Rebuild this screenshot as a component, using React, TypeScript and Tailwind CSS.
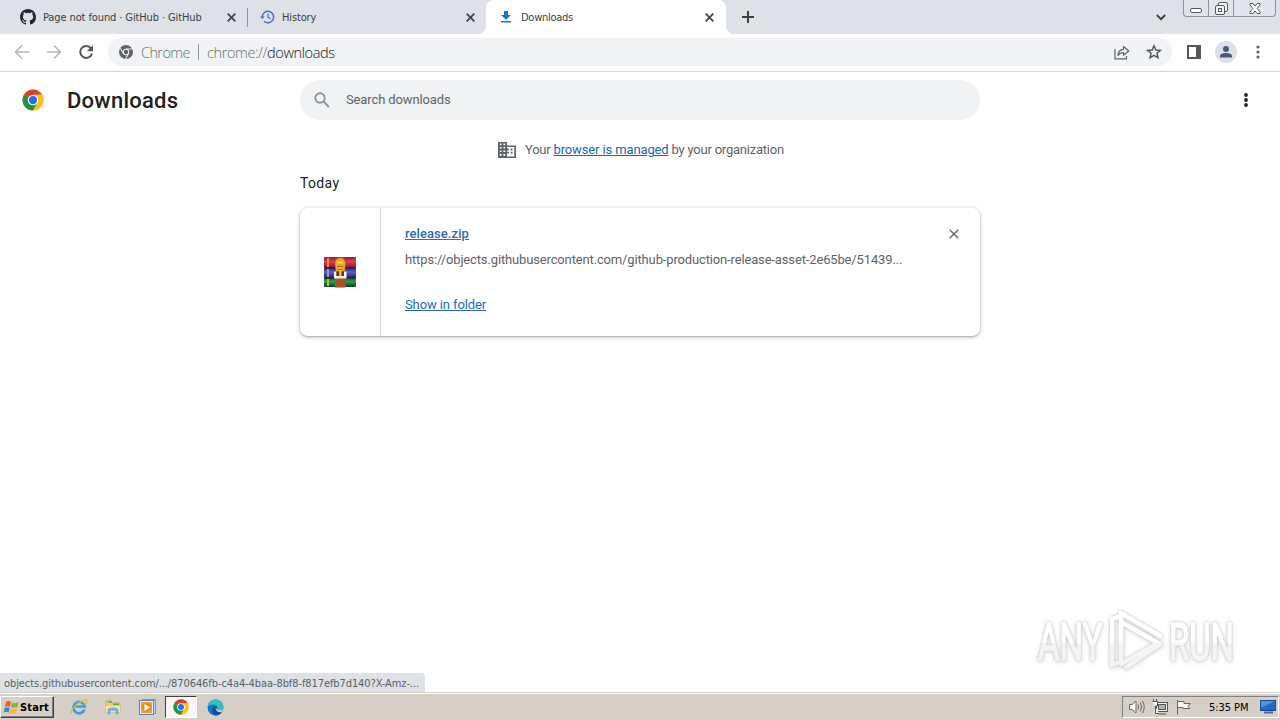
import type { ReactNode } from "react";

const ui = "font-['DejaVu_Sans_Condensed','DejaVu_Sans',sans-serif] [font-stretch:condensed]";

function ChromeLogo({ size }: { size: number }) {
  return (
    <svg width={size} height={size} viewBox="0 0 48 48" className="block shrink-0">
      <circle cx="24" cy="24" r="23" fill="#fbc116" />
      <path d="M24 24 4.1 12.5A23 23 0 0 1 43.9 12.5H24Z" fill="#e33b2e" />
      <path d="M24 24 4.1 12.5A23 23 0 0 0 24 47L34 29.700Z" fill="#229342" />
      <path d="M24 12.500H43.900A23 23 0 0 1 24 47L34 29.700Z" fill="#fbc116" />
      <circle cx="24" cy="24" r="11.500" fill="#fff" />
      <circle cx="24" cy="24" r="9" fill="#1a73e8" />
    </svg>
  );
}

function GrayChrome() {
  return (
    <svg width="14" height="14" viewBox="0 0 48 48" className="block shrink-0">
      <circle cx="24" cy="24" r="24" fill="#5f6368" />
      <path d="M24 13.500H45M15 29 4.500 11M33 29 22.500 47" stroke="#f0f2f4" strokeWidth="3.500" fill="none" />
      <circle cx="24" cy="24" r="11" fill="#f0f2f4" />
      <circle cx="24" cy="24" r="7.500" fill="#5f6368" />
    </svg>
  );
}

function Close({ color = "#45484d", size = 9, w = 1.9 }: { color?: string; size?: number; w?: number }) {
  return (
    <svg width={size} height={size} viewBox={`0 0 ${size} ${size}`} className="block shrink-0">
      <path d={`M.7.7 ${size - 0.7} ${size - 0.7}M${size - 0.7}.7.7 ${size - 0.7}`} stroke={color} strokeWidth={w} />
    </svg>
  );
}

function Dots({ color = "#5f6368", r = 1.6 }: { color?: string; r?: number }) {
  return (
    <svg width="6" height="16" viewBox="0 0 6 16" className="block" fill={color}>
      <circle cx="3" cy="3" r={r} />
      <circle cx="3" cy="8" r={r} />
      <circle cx="3" cy="13" r={r} />
    </svg>
  );
}

function TabStrip() {
  return (
    <div className={`flex h-[34px] bg-[#dee1e6] text-[11px] text-[#3c4043] ${ui}`}>
      <div className="flex w-[247px] items-center pl-5 pr-[11px]">
        <svg width="16" height="16" viewBox="0 0 16 16" className="shrink-0" fill="#24292f">
          <path d="M8 0C3.580 0 0 3.580 0 8c0 3.540 2.290 6.530 5.470 7.590.4.070.550-.170.550-.380 0-.190-.010-.820-.010-1.490-2.010.370-2.530-.490-2.690-.940-.090-.230-.480-.940-.820-1.130-.280-.150-.680-.520-.010-.530.630-.010 1.080.580 1.230.820.720 1.210 1.870.870 2.330.660.070-.520.280-.870.510-1.070-1.780-.2-3.640-.890-3.640-3.950 0-.870.310-1.590.820-2.150-.080-.2-.360-1.020.080-2.120 0 0 .670-.210 2.200.820a7.600 7.600 0 0 1 4 0c1.530-1.040 2.200-.820 2.200-.820.440 1.100.160 1.920.080 2.120.510.560.820 1.270.820 2.150 0 3.070-1.870 3.750-3.650 3.950.290.250.540.730.540 1.480 0 1.070-.010 1.930-.010 2.200 0 .210.150.460.550.380A8.010 8.010 0 0 0 16 8c0-4.420-3.580-8-8-8Z" />
        </svg>
        <span className="ml-[7px] grow whitespace-nowrap pt-[2px] tracking-[-0.11px]">Page not found · GitHub · GitHub</span>
        <Close />
      </div>
      <div className="mt-2 h-[19px] w-px bg-[#8f949b]" />
      <div className="flex w-[238px] items-center pl-3 pr-[11px]">
        <svg width="15" height="14" viewBox="0 0 15 14" className="shrink-0" fill="none" stroke="#4a72bd" strokeWidth="1.500">
          <path d="M2.200 7A5.700 5.700 0 1 1 4 11.200" />
          <path d="M8 3.500V7.300L10.500 8.800" strokeWidth="1.200" />
          <path d="M0 6.500H4.800L2.400 9Z" fill="#4a72bd" stroke="none" />
        </svg>
        <span className="ml-[7px] grow pt-[2px] tracking-[-0.15px]">History</span>
        <Close />
      </div>
      <div className="relative flex w-60 items-center rounded-t-lg bg-white pl-[15px] pr-3">
        <svg className="absolute -left-2 bottom-0" width="8" height="8" viewBox="0 0 8 8"><path d="M8 0V8H0A8 8 0 0 0 8 0Z" fill="#fff" /></svg>
        <svg className="absolute -right-2 bottom-0" width="8" height="8" viewBox="0 0 8 8"><path d="M0 0V8H8A8 8 0 0 1 0 0Z" fill="#fff" /></svg>
        <svg width="10" height="12" viewBox="0 0 10 12" className="shrink-0" fill="#1a73d8">
          <path d="M3 0H7V4H10L5 8.700 0 4H3ZM0 10H10V11.500H0Z" />
        </svg>
        <span className="ml-[10px] grow pt-[2px] tracking-[-0.27px]">Downloads</span>
        <Close />
      </div>
      <div className="flex flex-1 items-center pl-4">
        <svg width="12" height="12" viewBox="0 0 12 12"><path d="M6 0V12M0 6H12" stroke="#3c4043" strokeWidth="2" /></svg>
      </div>
      <svg width="10" height="7" viewBox="0 0 10 7" className="mr-[17px] mt-[14px]"><path d="M.8 1 5 5.200 9.200 1" fill="none" stroke="#3c4043" strokeWidth="1.800" /></svg>
      <div className="mr-[4px] flex h-[17px] w-[93px] rounded-b-[4px] border border-t-0 border-[#8e9299] bg-[#e2e4e9]">
        <div className="flex w-[25px] items-end justify-center border-r border-[#8e9299] pb-[3px]">
          <div className="h-[5px] w-3 rounded-[2px] border border-[#555a62] bg-white" />
        </div>
        <div className="flex w-[25px] justify-center border-r border-[#8e9299] pt-[2px]">
          <svg width="13" height="13" viewBox="0 0 13 13" fill="#f4f5f7" stroke="#555a62">
            <rect x="3.500" y=".5" width="9" height="9" rx="1.500" />
            <rect x=".5" y="3.500" width="9" height="9" rx="1.500" />
            <rect x="3.500" y="6.500" width="3" height="3" />
          </svg>
        </div>
        <div className="flex flex-1 justify-center pt-[3px]">
          <svg width="12" height="11" viewBox="0 0 12 11" fill="#fff" stroke="#555a62" strokeLinejoin="round">
            <path d="M1 .5H4L6 3 8 .5H11V2L8.200 5.500 11 9V10.500H8L6 8 4 10.500H1V9L3.800 5.500 1 2Z" />
          </svg>
        </div>
      </div>
    </div>
  );
}

function Toolbar() {
  return (
    <div className="flex h-[38px] items-center border-b border-[#d5d7d9] bg-white pb-px">
      <svg width="80" height="16" viewBox="0 0 80 16" className="ml-[14px] mr-[14px] shrink-0" fill="none">
        <path d="M15 8H1.500M8 1.500 1.500 8 8 14.500M33 8H46.500M40 1.500 46.500 8 40 14.500" stroke="#b5b7ba" strokeWidth="1.600" />
        <path d="M77 4.300A6 6 0 1 0 78 9.500" stroke="#55585d" strokeWidth="2" />
        <path d="M79 1V7.200H72.800Z" fill="#55585d" />
      </svg>
      <div className="flex h-7 w-[1064px] shrink-0 items-center rounded-full bg-[#f0f2f4] pl-[11px] pr-[10px] text-[14.5px] text-[#6a6e73]">
        <GrayChrome />
        <span className="ml-2 w-[49px] whitespace-nowrap pt-[2px] font-['Open_Sans',sans-serif] font-light tracking-[-0.6px]">Chrome</span>
        <span className="ml-2 h-4 w-px bg-[#8f9399]" />
        <span className="ml-2 grow whitespace-nowrap pt-[2px] font-['Open_Sans',sans-serif] font-light tracking-[-0.4px]">
          chrome://<span className="text-[#17191c]">downloads</span>
        </span>
        <svg width="16" height="15" viewBox="0 0 16 15" fill="none" stroke="#5f6368" strokeWidth="1.200" className="mr-[16px]">
          <path d="M1 4V13.800H12.500V11" />
          <path d="M4 10.500C4.200 6.500 6.500 4.400 9.500 4.300V1.500L14.800 6 9.500 10.200V7.500C7 7.500 5.300 8.500 4 10.500Z" strokeLinejoin="round" />
        </svg>
        <svg width="16" height="16" viewBox="0 0 16 16" fill="none" stroke="#55585d" strokeWidth="1.500">
          <path d="M8 1.800 9.800 6 14.300 6.400 10.900 9.300 12 13.800 8 11.400 4 13.800 5.100 9.300 1.700 6.400 6.200 6Z" />
        </svg>
      </div>
      <svg width="14" height="14" viewBox="0 0 14 14" className="ml-[15px]"><path d="M0 0H14V14H0ZM2 2V12H9V2Z" fill="#55585d" fillRule="evenodd" /></svg>
      <svg width="22" height="22" viewBox="0 0 22 22" className="ml-[14px]">
        <circle cx="11" cy="11" r="11" fill="#dcdfe4" />
        <circle cx="11" cy="8" r="3" fill="#4a5878" />
        <path d="M5 16.500V15C5 12.800 9 12 11 12S17 12.800 17 15V16.500Z" fill="#4a5878" />
      </svg>
      <div className="ml-[18px]"><Dots /></div>
    </div>
  );
}

function RarIcon() {
  return (
    <svg width="32" height="31" viewBox="0 0 32 31" className="block">
      <defs>
        <linearGradient id="r" x1="0" x2="0" y1="0" y2="1"><stop offset="0" stopColor="#8d1830" /><stop offset=".4" stopColor="#e0405a" /><stop offset="1" stopColor="#8c1028" /></linearGradient>
        <linearGradient id="b" x1="0" x2="0" y1="0" y2="1"><stop offset="0" stopColor="#292670" /><stop offset=".4" stopColor="#5b62d0" /><stop offset="1" stopColor="#25215e" /></linearGradient>
        <linearGradient id="g" x1="0" x2="0" y1="0" y2="1"><stop offset="0" stopColor="#0a5a28" /><stop offset=".4" stopColor="#2da04c" /><stop offset="1" stopColor="#063d1a" /></linearGradient>
      </defs>
      <rect y="0" width="32" height="11" rx="1" fill="url(#r)" />
      <rect y="11" width="32" height="10" rx="1" fill="url(#b)" />
      <rect y="21" width="32" height="9" rx="1" fill="url(#g)" />
      <path d="M0 10.800H32M0 20.800H32" stroke="#2c1030" />
      <path d="M4 1V10" stroke="#e0903c" strokeWidth="2" />
      <path d="M4 12V20" stroke="#a994b0" strokeWidth="2" />
      <path d="M4 22V29" stroke="#c3b83c" strokeWidth="2" />
      <rect x="11" y="0" width="10.500" height="30.500" fill="#9a4a20" />
      <path d="M11 22H21.500V30H11Z" fill="#a8522a" />
      <path d="M10 14.500H12.500V19H20V14.500H22.500V21.500H10Z" fill="#f2f2ee" />
      <path d="M12.500 15H20V19H12.500Z" fill="#5c3720" />
      <path d="M11 6Q12 1 16.200 1T21.500 6L20.500 14H12Z" fill="#eda621" />
      <path d="M13.500 5.500H19" stroke="#ffe07a" strokeWidth="1.500" />
      <path d="M15.200 9H17.500V19H15.200Z" fill="#f5c842" />
      <path d="M13.500 9.500H19M14 12.500H18.500" stroke="#a8620f" />
    </svg>
  );
}

function DownloadCard() {
  return (
    <div className="flex h-32 w-[680px] rounded-lg bg-white shadow-[0_1px_2px_rgba(60,64,67,0.35),0_1px_4px_1px_rgba(60,64,67,0.17)]">
      <div className="flex w-[81px] items-center justify-center border-r border-[#d8dadc]"><RarIcon /></div>
      <div className="flex flex-1 flex-col items-start whitespace-nowrap pl-6 pt-[18px] text-[13px] leading-4">
        <a className="font-medium tracking-[0.07px] text-[#2f69b8] underline">release.zip</a>
        <span className="mt-[10px] tracking-[-0.145px] text-[#5f6368]">https://objects.githubusercontent.com/github-production-release-asset-2e65be/51439...</span>
        <a className="mt-[29px] tracking-[-0.1px] text-[#2668c5] underline">Show in folder</a>
      </div>
      <div className="pr-[21px] pt-[21px]"><Close color="#65696e" size={10} w={1.4} /></div>
    </div>
  );
}

function Watermark() {
  return (
    <svg width="230" height="80" viewBox="0 0 230 80" className="absolute right-[18px] bottom-[6px] [filter:drop-shadow(0_0_1px_#c6c6c6)_drop-shadow(0_1px_2px_#dadada)]">
      <defs>
        <linearGradient id="wm" gradientUnits="userSpaceOnUse" x1="0" x2="0" y1="0" y2="70">
          <stop offset=".52" stopColor="#fff" /><stop offset=".54" stopColor="#f4f4f4" />
        </linearGradient>
        <linearGradient id="wt" gradientUnits="userSpaceOnUse" x1="0" x2="0" y1="-54" y2="16">
          <stop offset=".52" stopColor="#fff" /><stop offset=".54" stopColor="#f4f4f4" />
        </linearGradient>
      </defs>
      <g fill="url(#wt)" stroke="url(#wt)" strokeWidth="1.600" fontFamily="Liberation Sans Narrow, Roboto, sans-serif" fontSize="52">
        <text transform="translate(6 54) scale(.635 1)">ANY</text>
        <text transform="translate(137 54) scale(.63 1)">RUN</text>
      </g>
      <g fill="none" stroke="url(#wm)" strokeWidth="4.500" strokeLinejoin="round">
        <path d="M89 48V7L130 31" />
        <path d="M89 16 126 37 89 58V16" />
        <path d="M89 10 80 13V59L87 56M130 37 93 62" />
      </g>
    </svg>
  );
}

function TaskButton({ active, children }: { active?: boolean; children: ReactNode }) {
  return (
    <div className={`flex h-[22px] w-8 items-center justify-center ${active ? "border border-[#fff] border-l-[#404040] border-t-[#404040] bg-[#f8f7f5]" : ""}`}>{children}</div>
  );
}

function Taskbar() {
  return (
    <div className={`flex h-7 items-center border-t border-[#d4d0c8] bg-[#d5cfc7] shadow-[inset_0_1px_0_#fff] text-[11px] text-black ${ui}`}>
      <div className="mt-px flex h-[22px] w-[54px] items-center border border-[#404040] border-l-white border-t-white bg-[#d5cfc7] pl-[2px] font-bold shadow-[inset_-1px_-1px_0_#808080]">
        <svg width="17" height="16" viewBox="0 0 17 16" className="shrink-0">
          <path d="M3 3Q5.500 1 8 3L7 8Q4.500 6 2 8Z" fill="#e9622b" />
          <path d="M9 3.500Q12 5 15.500 3L14.500 8Q11 9.500 8 8.300Z" fill="#83b73b" />
          <path d="M1.700 9Q4 7.500 6.700 9L5.700 13.500Q3 12 .7 13.700Z" fill="#3d86cf" />
          <path d="M7.700 9.500Q10.500 11 14.200 9L13 14Q9.500 15.500 6.500 14Z" fill="#f3bb31" />
        </svg>
        <span className="pt-[2px] tracking-[0.15px]">Start</span>
      </div>
      <div className="ml-[9px] mt-px flex gap-[2px]">
        <TaskButton>
          <svg width="18" height="18" viewBox="0 0 18 18" fill="none">
            <path d="M14.500 11.500A5.700 5.700 0 1 1 14.700 8.500H5" stroke="#3ba1dc" strokeWidth="2.600" />
            <path d="M1.500 16C-.5 12 11 1 16.300 2.200 17.500 2.700 17 5 15.500 6.500" stroke="#e6b73c" strokeWidth="1.300" />
          </svg>
        </TaskButton>
        <TaskButton>
          <svg width="18" height="16" viewBox="0 0 18 16">
            <path d="M2 2H7L8 4H16V13H2Z" fill="#eccf72" stroke="#c7a644" strokeWidth=".7" />
            <path d="M4 3H8M9 5.300H15" stroke="#5fa95c" strokeWidth="1.500" />
            <path d="M2 7H16V13H2Z" fill="#f8e6a0" />
            <path d="M4 15V10Q9 7.500 14 10V15H12V11.500H6V15Z" fill="#76b8e4" stroke="#5497c5" strokeWidth=".5" />
          </svg>
        </TaskButton>
        <TaskButton>
          <svg width="17" height="16" viewBox="0 0 17 16">
            <rect x="3.500" y="0.500" width="13" height="14" fill="#b9d5ea" stroke="#6d9cc0" />
            <rect x=".5" y="1.500" width="14" height="14" fill="#f7a13a" stroke="#5489b5" />
            <rect x="1.500" y="2.500" width="12" height="12" fill="none" stroke="#e3f1fa" />
            <circle cx="7.500" cy="8.500" r="5" fill="#ef8a1d" />
            <path d="M5.500 5V12L11 8.500Z" fill="#fff" />
          </svg>
        </TaskButton>
        <TaskButton active><ChromeLogo size={16} /></TaskButton>
        <TaskButton>
          <svg width="17" height="17" viewBox="0 0 17 17">
            <circle cx="8.500" cy="8.500" r="8" fill="#0f78c8" />
            <path d="M.6 8C1 3.500 4.500.5 8.700.5 13.500.5 16.500 4 16.500 7.600 16.500 10 14.800 11.500 12.500 11.500 10.800 11.500 9.800 10.900 10.400 9.900 11.200 8 9.600 5.500 6.500 5.500 3.700 5.500 1.400 6.500.6 8Z" fill="#37bfc2" />
            <path d="M10 10Q9 13 14.500 13.200 12 16.500 8.500 16.500 5 15 5 11.500 5 8.500 8 7.400 9.800 8.200 10 10Z" fill="#124f9b" />
            <path d="M10 10Q11 12.500 16.300 10L14.500 13.200Q9 13.500 8.500 9Z" fill="#d5cfc7" />
          </svg>
        </TaskButton>
      </div>
      <div className="ml-auto mr-px mt-px flex h-[22px] w-[157px] items-center border border-white border-l-[#808080] border-t-[#808080] pl-[5px]">
        <svg width="18" height="16" viewBox="0 0 18 16" fill="none" stroke="#686868">
          <path d="M1.500 5.500H4L8 2V14L4 10.500H1.500Z" fill="#f8f8f8" />
          <path d="M10 5.500Q11.500 8 10 10.500M12.300 3.500Q15 8 12.300 12.500M14.500 2Q18 8 14.500 14" />
        </svg>
        <svg width="16" height="16" viewBox="0 0 16 16" className="ml-[6px]" fill="#f4f4f4" stroke="#555">
          <rect x="4.500" y="3.500" width="11" height="9" />
          <rect x="6.500" y="5.500" width="7" height="5" fill="#b8b5b0" />
          <path d="M7 15H14M.5 2.500H5.500V7H3.500V14.500H7M1.500 0V2M4.500 0V2" />
        </svg>
        <svg width="16" height="16" viewBox="0 0 16 16" className="ml-[8px]" fill="#f8f8f8" stroke="#666">
          <path d="M1.500 1V15.500M1.500 2.500H8V4.500H14.500L12 7.500 14 9.500H7V8.500H1.500" />
        </svg>
        <span className="ml-[17px] w-[42px] whitespace-nowrap pt-[2px] tracking-[-0.05px]">5:35 PM</span>
        <svg width="16" height="14" viewBox="0 0 16 14" className="ml-[9px]">
          <rect x=".5" y=".5" width="15" height="10" fill="#2269c6" stroke="#164a91" />
          <path d="M1 1H15L1 8Z" fill="#4c94e2" />
          <path d="M4 12.500H13" stroke="#4a6a94" strokeWidth="2" />
        </svg>
      </div>
    </div>
  );
}

export default function App() {
  return (
    <div className="flex h-[720px] w-[1280px] flex-col overflow-hidden bg-white font-[Roboto,sans-serif]">
      <TabStrip />
      <Toolbar />
      <main className="relative flex h-[620px] flex-col">
        <header className="flex h-14 items-center">
          <div className="flex w-[300px] items-center pl-[22px]">
            <ChromeLogo size={22} />
            <h1 className="ml-[23px] text-[22px] font-medium tracking-[0.25px] text-[#202124]">Downloads</h1>
          </div>
          <div className="flex h-10 w-[680px] items-center rounded-full bg-[#f0f2f4] pl-[14px]">
            <svg width="16" height="16" viewBox="0 0 16 16" fill="none" stroke="#909499" strokeWidth="1.900">
              <circle cx="6" cy="6" r="4.700" />
              <path d="M9.500 9.500 15 15" />
            </svg>
            <span className="ml-4 text-[13px] tracking-[-0.12px] text-[#5f6368]">Search downloads</span>
          </div>
          <div className="ml-auto mr-[31px]"><Dots color="#202124" r={1.9} /></div>
        </header>
        <div className="mx-auto flex w-[680px] flex-col">
          <div className="mt-3 flex h-5 items-center pl-[198px] text-[13px] text-[#5f6368]">
            <svg width="18" height="16" viewBox="0 0 17 16" preserveAspectRatio="none" fill="#5f6368">
              <path fillRule="evenodd" d="M0 0H8.500V3.500H17V16H0ZM1.700 1.600V3.200H3.400V1.600ZM5.100 1.600V3.200H6.800V1.600ZM1.700 5V6.600H3.400V5ZM5.100 5V6.600H6.800V5ZM1.700 8.500V10.100H3.400V8.500ZM5.100 8.500V10.100H6.800V8.500ZM1.700 12V13.800H3.400V12ZM5.100 12V13.800H6.800V12ZM8.500 5.100V6.600H10.200V8.400H8.500V9.800H10.200V11.500H8.500V14.400H15.400V5.100ZM12 6.600H13.700V8.400H12ZM12 9.800H13.700V11.500H12Z" />
            </svg>
            <span className="ml-[9px] whitespace-nowrap tracking-[-0.22px]">Your <a className="tracking-[-0.13px] text-[#1967b8] underline">browser is managed</a> by your organization</span>
          </div>
          <h2 className="mt-[12px] h-5 pt-px text-[14px] leading-5 tracking-[0.35px] text-[#202124]">Today</h2>
          <div className="mt-4"><DownloadCard /></div>
        </div>
        <Watermark />
        <div className={`absolute bottom-0 left-0 flex h-[19px] w-[425px] items-center whitespace-nowrap rounded-tr-[4px] bg-[#dee1e6] pl-1 pt-[3px] text-[11px] tracking-[-0.09px] text-[#5b5f64] ${ui}`}>
          objects.githubusercontent.com/.../870646fb-c4a4-4baa-8bf8-f817efb7d140?X-Amz-...
        </div>
      </main>
      <Taskbar />
    </div>
  );
}
